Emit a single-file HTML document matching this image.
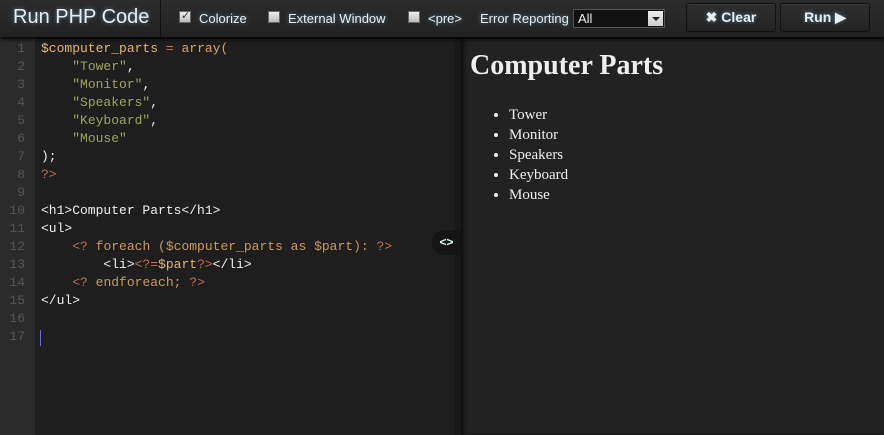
<!DOCTYPE html>
<html><head><meta charset="utf-8"><style>
*{margin:0;padding:0;box-sizing:border-box}
body{width:884px;height:435px;overflow:hidden;background:#1f1f1f;font-family:"Liberation Sans",sans-serif;position:relative}
#hdr{position:absolute;left:0;top:0;width:884px;height:37px;background:linear-gradient(#2c2c2c,#222);box-shadow:0 2px 4px #000;z-index:3}
.t{position:absolute;color:#e8eef2;text-shadow:0 0 4px rgba(120,190,230,.6)}
.title{left:13px;top:6px;font-size:20px;}
.sep{position:absolute;left:160px;top:0;width:1px;height:37px;background:#111}
.cb{position:absolute;top:11px;width:12px;height:12px;background:linear-gradient(#eee,#bbb);border:1px solid #666}
.lab{font-size:13px;top:11px}
.sel{position:absolute;left:573px;top:9px;width:92px;height:19px;background:#111;border:1px solid #555;color:#eee;font-size:13px;padding:1px 4px}
.sel i{position:absolute;right:1px;top:1px;width:15px;height:15px;background:linear-gradient(#eee,#ccc)}
.sel i:after{content:"";position:absolute;left:4px;top:6px;border:4px solid transparent;border-top:4px solid #222}
.btn{position:absolute;top:3px;height:29px;border-radius:3px;background:linear-gradient(#2e2e2e,#222);border:1px solid #111;box-shadow:inset 0 1px 0 #3a3a3a;color:#e8eef2;font-weight:bold;font-size:14px;text-align:center;line-height:27px;text-shadow:0 0 4px rgba(120,190,230,.6)}
#gut{position:absolute;left:0;top:37px;width:35px;height:398px;background:#2b2b2b}
#ed{position:absolute;left:35px;top:37px;width:420px;height:398px;background:#1e1e1e}
#div{position:absolute;left:455px;top:37px;width:6px;height:398px;background:#191919}
#out{position:absolute;left:461px;top:37px;width:423px;height:398px;background:#222;box-shadow:inset 3px 0 4px #111}
.ln{position:absolute;left:0;width:25px;text-align:right;color:#555;font:13px "Liberation Mono",monospace}
.cl{position:absolute;left:41px;white-space:pre;font:13px "Liberation Mono",monospace;color:#eee}
.v{color:#e2b574}.o{color:#e06a4a}.f{color:#d9a25e}.s{color:#9ea45e}.p{color:#b7714f}.k{color:#c99a5a}
h1{position:absolute;left:470px;top:50px;font:bold 28px "Liberation Serif",serif;color:#eee}
ul{position:absolute;left:509px;top:105px;font:15px "Liberation Serif",serif;color:#eee;line-height:20px}
#tab{position:absolute;left:432px;top:230px;width:29px;height:25px;border-radius:13px 0 0 13px;background:#151515;color:#dff;font-size:12px;line-height:25px;text-align:center;font-weight:bold;z-index:2}
#cur{position:absolute;left:40px;top:330px;width:1px;height:16px;background:#6b6bd0}
</style></head><body>
<div id="hdr">
<div class="t title">Run PHP Code</div>
<div class="sep"></div>
<div class="cb" style="left:179px"><span style="position:absolute;left:1px;top:-3px;font-size:11px;color:#335">✓</span></div>
<div class="t lab" style="left:199px">Colorize</div>
<div class="cb" style="left:268px"></div>
<div class="t lab" style="left:288px">External Window</div>
<div class="cb" style="left:408px"></div>
<div class="t lab" style="left:428px">&lt;pre&gt;</div>
<div class="t lab" style="left:480px">Error Reporting</div>
<div class="sel">All<i></i></div>
<div class="btn" style="left:686px;width:90px">✖ Clear</div>
<div class="btn" style="left:780px;width:90px">Run ▶</div>
</div>
<div id="gut"></div><div id="ed"></div><div id="div"></div><div id="out"></div>
<div id="tab">&lt;&gt;</div>
<div id="cur"></div>
<div class="ln" style="top:41px">1</div><div class="ln" style="top:59px">2</div><div class="ln" style="top:77px">3</div><div class="ln" style="top:95px">4</div><div class="ln" style="top:113px">5</div><div class="ln" style="top:131px">6</div><div class="ln" style="top:149px">7</div><div class="ln" style="top:167px">8</div><div class="ln" style="top:185px">9</div><div class="ln" style="top:203px">10</div><div class="ln" style="top:221px">11</div><div class="ln" style="top:239px">12</div><div class="ln" style="top:257px">13</div><div class="ln" style="top:275px">14</div><div class="ln" style="top:293px">15</div><div class="ln" style="top:311px">16</div><div class="ln" style="top:329px">17</div>
<div class="cl" style="top:41px"><span class="v">$computer_parts</span> <span class="o">=</span> <span class="f">array(</span></div>
<div class="cl" style="top:59px">    <span class="s">"Tower"</span>,</div>
<div class="cl" style="top:77px">    <span class="s">"Monitor"</span>,</div>
<div class="cl" style="top:95px">    <span class="s">"Speakers"</span>,</div>
<div class="cl" style="top:113px">    <span class="s">"Keyboard"</span>,</div>
<div class="cl" style="top:131px">    <span class="s">"Mouse"</span></div>
<div class="cl" style="top:149px">);</div>
<div class="cl" style="top:167px"><span class="p">?&gt;</span></div>
<div class="cl" style="top:203px">&lt;h1&gt;Computer Parts&lt;/h1&gt;</div>
<div class="cl" style="top:221px">&lt;ul&gt;</div>
<div class="cl" style="top:239px">    <span class="p">&lt;?</span> <span class="k">foreach ($computer_parts as $part):</span> <span class="p">?&gt;</span></div>
<div class="cl" style="top:257px">        &lt;li&gt;<span class="p">&lt;?</span><span class="o">=</span><span class="v">$part</span><span class="p">?&gt;</span>&lt;/li&gt;</div>
<div class="cl" style="top:275px">    <span class="p">&lt;?</span> <span class="k">endforeach;</span> <span class="p">?&gt;</span></div>
<div class="cl" style="top:293px">&lt;/ul&gt;</div>
<h1>Computer Parts</h1>
<ul><li>Tower</li><li>Monitor</li><li>Speakers</li><li>Keyboard</li><li>Mouse</li></ul>
</body></html>
